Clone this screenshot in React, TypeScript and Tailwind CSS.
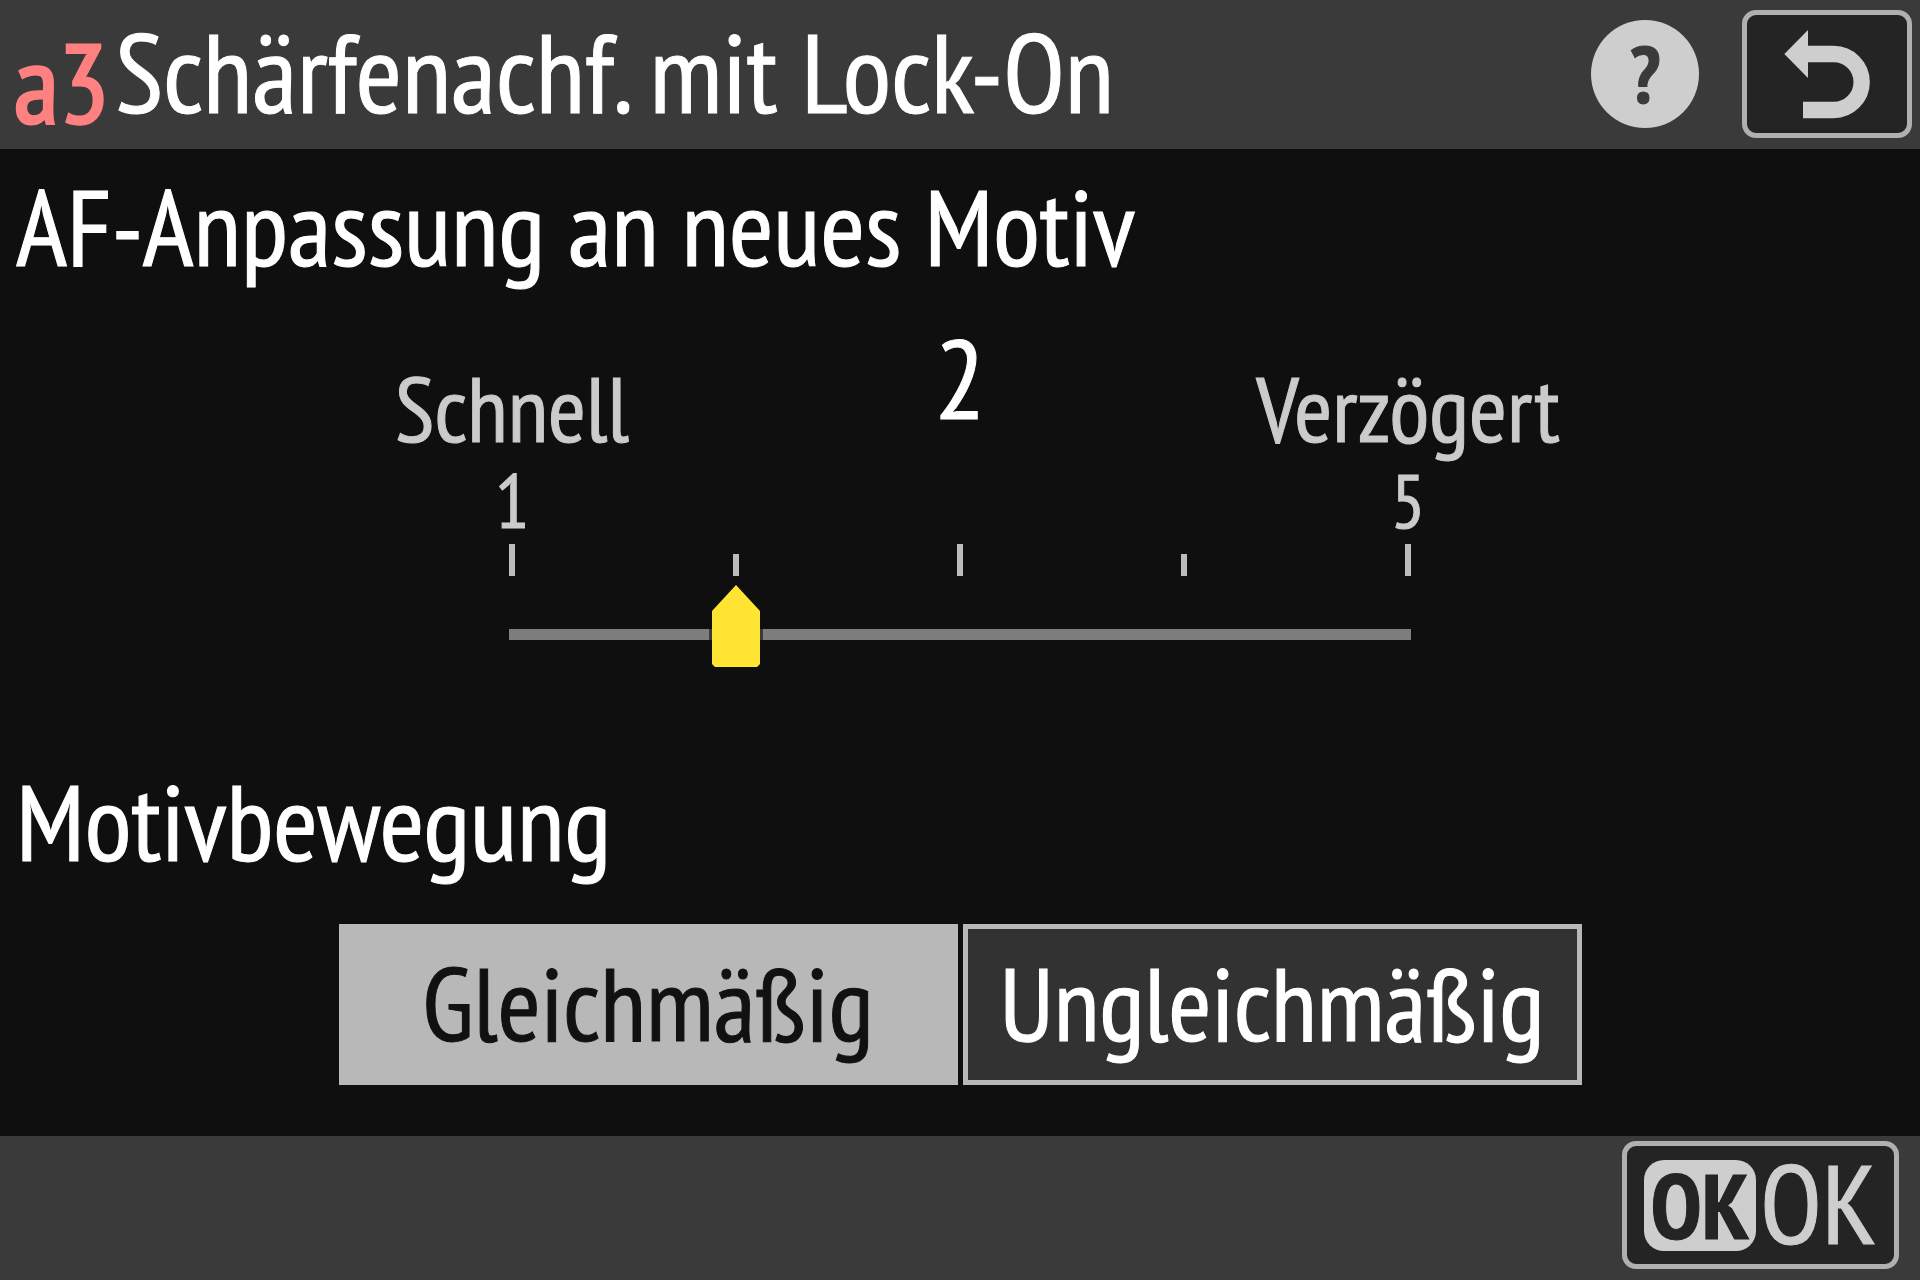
import { useState } from "react";
import clsx from "clsx";

const MIN = 1;
const MAX = 5;
const ticks = [1, 2, 3, 4, 5];
const movements = ["Gleichmäßig", "Ungleichmäßig"];

const frameButton =
  "h-32 rounded-[14px] border-5 border-[#b0b0b0] bg-[#242424] text-[#cecece] flex items-center justify-center";

function BackIcon() {
  return (
    <svg viewBox="665 85 270 270" className="size-[90px]" aria-hidden="true">
      <path d="M672 160 743 88V232Z" fill="currentColor" />
      <path d="M738 160H820A84 84 0 0 1 820 328H728" fill="none" stroke="currentColor" strokeWidth="49" />
    </svg>
  );
}

function Header() {
  return (
    <header className="flex items-start justify-between bg-[#3a3a3a] pt-2.5 pr-2 pb-[11px] pl-3.5">
      <h1 className="flex items-start gap-1.5 text-[112px] leading-[124px]">
        <span className="mt-4 leading-[112px] text-[#ff8080] [-webkit-text-stroke:3px]">a3</span>
        <span>Schärfenachf. mit Lock-On</span>
      </h1>
      <div className="flex items-center gap-[43px]">
        <button
          type="button"
          aria-label="Hilfe"
          className="size-[108px] rounded-full bg-[#cecece] text-[#3a3a3a] font-bold text-[80px] leading-[108px]"
        >
          ?
        </button>
        <button type="button" aria-label="Zurück" className={clsx(frameButton, "w-[170px]")}>
          <BackIcon />
        </button>
      </div>
    </header>
  );
}

function TrackingSlider() {
  const [value, setValue] = useState(2);

  return (
    <div className="mt-7 flex flex-col items-center text-[#cbcbcb]">
      <div className="grid grid-cols-3 items-end w-full max-w-[1344px] text-center text-[92px] leading-[96px]">
        <span>Schnell</span>
        <output htmlFor="af" className="pb-4 text-[112px] leading-[124px] text-white">
          {value}
        </output>
        <span>Verzögert</span>
      </div>
      <div className="flex justify-between w-full max-w-[944px] text-center text-[76px] leading-[88px]">
        <span className="w-12">{MIN}</span>
        <span className="w-12">{MAX}</span>
      </div>
      <div className="flex items-end justify-between w-full max-w-[902px]">
        {ticks.map((tick) => (
          <span key={tick} className={clsx("w-1.5 bg-[#bdbdbd]", tick % 2 ? "h-8" : "h-[22px]")} />
        ))}
      </div>
      <input
        id="af"
        type="range"
        aria-labelledby="af-label"
        min={MIN}
        max={MAX}
        value={value}
        onChange={(e) => setValue(Number(e.target.value))}
        className="mt-[9px] h-[82px] w-full max-w-[950px] appearance-none bg-[linear-gradient(#7d7d7d,#7d7d7d)] bg-[length:902px_11px] bg-[position:center_44px] bg-no-repeat [&::-webkit-slider-thumb]:h-[82px] [&::-webkit-slider-thumb]:w-[54px] [&::-webkit-slider-thumb]:appearance-none [&::-webkit-slider-thumb]:bg-[linear-gradient(90deg,#3a3a3a_3px,#ffe433_3px,#ffe433_51px,#3a3a3a_51px)] [&::-webkit-slider-thumb]:[clip-path:polygon(27px_0,51px_26px,51px_44px,54px_44px,54px_55px,51px_55px,51px_79px,48px_82px,6px_82px,3px_79px,3px_55px,0_55px,0_44px,3px_44px,3px_26px)]"
      />
    </div>
  );
}

function MovementChoice() {
  const [selected, setSelected] = useState(movements[0]);

  return (
    <div role="group" aria-labelledby="movement-label" className="mt-[41px] flex justify-center gap-[5px]">
      {movements.map((name) => (
        <button
          key={name}
          type="button"
          aria-pressed={selected === name}
          onClick={() => setSelected(name)}
          className={clsx(
            "h-[161px] w-full max-w-[619px] border-5 border-[#b8b8b8] pb-1 text-[104px] leading-[124px]",
            selected === name ? "bg-[#b8b8b8] text-[#111111]" : "bg-[#323232] text-white"
          )}
        >
          {name}
        </button>
      ))}
    </div>
  );
}

export default function App() {
  return (
    <div className="flex min-h-screen flex-col bg-[#0f0f0f] font-['PT_Sans_Narrow','Roboto_Condensed',sans-serif] text-white [-webkit-text-stroke:1px]">
      <Header />

      <main className="flex-1 px-4 pt-[15px] pb-[51px]">
        <h2 id="af-label" className="text-[108px] leading-[124px]">
          AF-Anpassung an neues Motiv
        </h2>
        <TrackingSlider />

        <h2 id="movement-label" className="mt-[92px] text-[108px] leading-[124px]">
          Motivbewegung
        </h2>
        <MovementChoice />
      </main>

      <footer className="flex justify-end bg-[#3a3a3a] pt-[5px] pr-[21px] pb-[11px]">
        <button type="button" className={clsx(frameButton, "w-[277px] gap-1 text-[112px] leading-[112px]")}>
          <span className="flex h-[91px] w-28 items-center justify-center rounded-[20px] bg-[#cecece] text-[92px] leading-[96px] font-bold text-[#242424]">
            OK
          </span>
          <span className="pb-1">OK</span>
        </button>
      </footer>
    </div>
  );
}
